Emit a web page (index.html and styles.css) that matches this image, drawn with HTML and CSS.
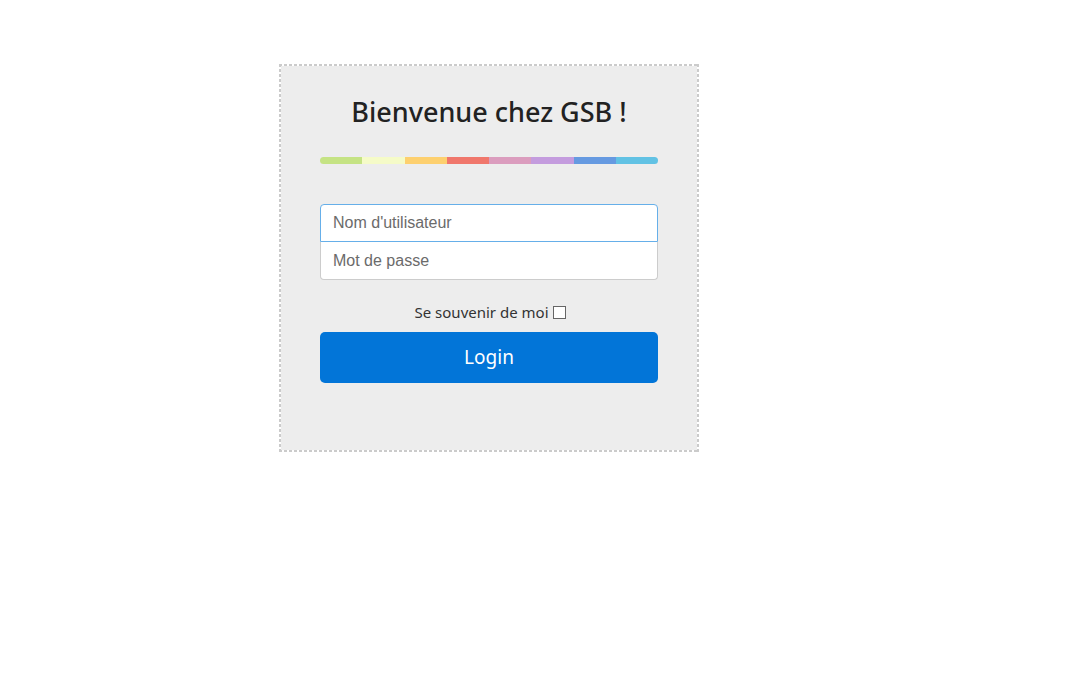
FILE: index.html
```html
<!DOCTYPE html>
<html lang="fr">
<head>
<meta charset="utf-8">
<title>GSB - Connexion</title>
<link rel="stylesheet" href="styles.css">
</head>
<body>
<div class="page">
  <form class="login-box">
    <h1 class="title">Bienvenue chez GSB !</h1>
    <div class="rainbow">
      <span class="c1"></span><span class="c2"></span><span class="c3"></span><span class="c4"></span><span class="c5"></span><span class="c6"></span><span class="c7"></span><span class="c8"></span>
    </div>
    <div class="fields">
      <input class="field field-top" type="text" placeholder="Nom d'utilisateur" autofocus>
      <input class="field field-bottom" type="password" placeholder="Mot de passe">
    </div>
    <label class="remember">Se souvenir de moi <span class="box"></span></label>
    <button class="login-btn" type="button">Login</button>
  </form>
</div>
</body>
</html>
```
FILE: styles.css
```css
html, body {
  margin: 0;
  padding: 0;
  background: #fff;
}
.page {
  padding: 64px 0 0 279px;
}
.login-box {
  box-sizing: border-box;
  width: 420px;
  height: 388px;
  border: 2px solid transparent;
  background:
    repeating-linear-gradient(90deg, #cbcbcb 0 3px, transparent 3px 5px) top left / 100% 2px no-repeat border-box,
    repeating-linear-gradient(90deg, #cbcbcb 0 3px, transparent 3px 5px) bottom left / 100% 2px no-repeat border-box,
    repeating-linear-gradient(180deg, #cbcbcb 0 3px, transparent 3px 5px) top left / 2px 100% no-repeat border-box,
    repeating-linear-gradient(180deg, #cbcbcb 0 3px, transparent 3px 5px) top right / 2px 100% no-repeat border-box,
    linear-gradient(#ededed, #ededed) padding-box;
  padding: 0 39px;
  display: flex;
  flex-direction: column;
}
.title {
  margin: 28px 0 0;
  font-family: "Noto Sans", "Open Sans", sans-serif;
  font-weight: 500;
  font-size: 27px;
  line-height: 36px;
  color: #222;
  text-align: center;
}
.rainbow {
  display: flex;
  height: 7px;
  margin-top: 27px;
  border-radius: 4px;
  overflow: hidden;
}
.rainbow span { flex: 1; }
.c1 { background: #c5e384; }
.c2 { background: #f5fbc8; }
.c3 { background: #fdd06f; }
.c4 { background: #f0776c; }
.c5 { background: #db9dbe; }
.c6 { background: #c49cde; }
.c7 { background: #669ae1; }
.c8 { background: #62c2e4; }
.fields {
  margin-top: 40px;
  display: flex;
  flex-direction: column;
}
.field {
  box-sizing: border-box;
  width: 100%;
  height: 38px;
  margin: 0;
  padding: 0 12px;
  font-family: "Liberation Sans", Arial, sans-serif;
  font-size: 16px;
  color: #555;
  background: #fff;
  border: 1px solid #ccc;
  outline: none;
}
.field::placeholder { color: #6b6b6b; }
.field-top {
  border-color: #66afe9;
  border-radius: 4px 4px 0 0;
}
.field-bottom {
  border-top: none;
  border-radius: 0 0 4px 4px;
}
.remember {
  margin-top: 22px;
  display: flex;
  justify-content: center;
  align-items: center;
  gap: 4px;
  padding-left: 2px;
  font-family: "Noto Sans", "Open Sans", sans-serif;
  font-size: 15px;
  line-height: 20px;
  color: #333;
}
.box {
  width: 11px;
  height: 11px;
  border: 1px solid #666;
  background: #fff;
}
.login-btn {
  margin-top: 10px;
  height: 51px;
  border: none;
  border-radius: 5px;
  background: #0275d8;
  color: #fff;
  font-family: "Noto Sans", "Open Sans", sans-serif;
  font-size: 19px;
  padding-bottom: 2px;
}
```
